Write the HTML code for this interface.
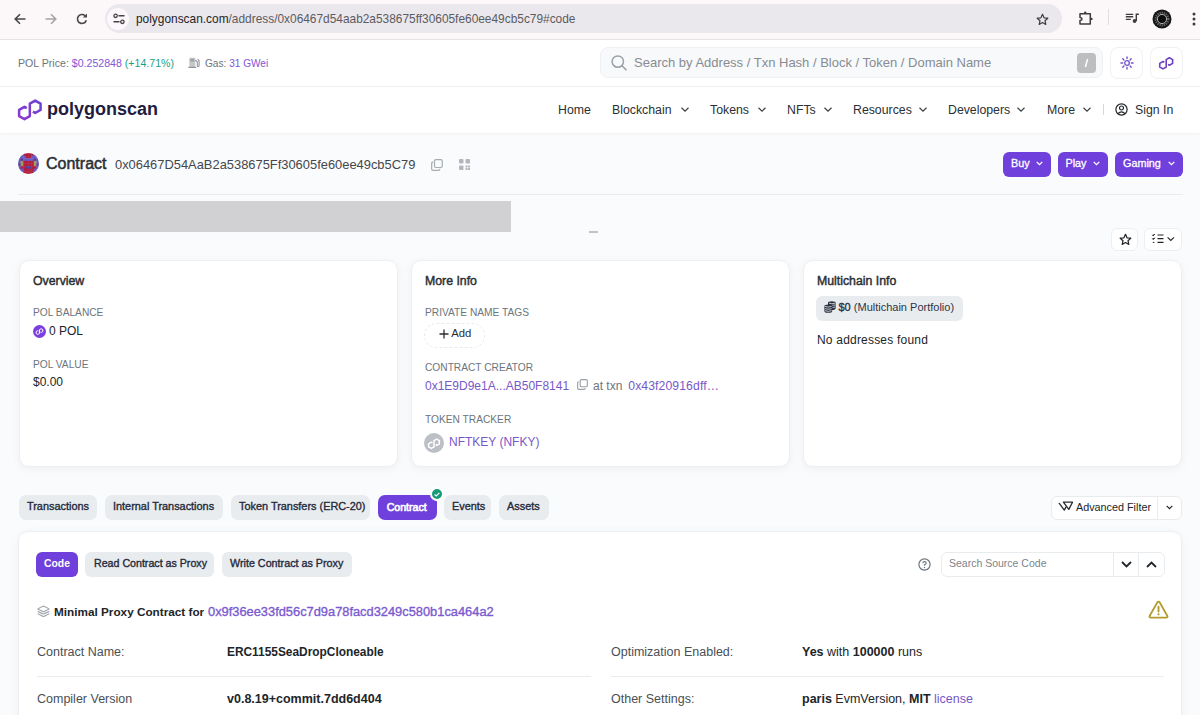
<!DOCTYPE html>
<html><head><meta charset="utf-8">
<style>
*{box-sizing:border-box;margin:0;padding:0}
html,body{width:1200px;height:715px;overflow:hidden}
body{font-family:"Liberation Sans",sans-serif;background:#fafbfc;position:relative;color:#212529;line-height:normal}
.a{position:absolute;white-space:nowrap}
svg{display:block;position:absolute;overflow:visible}
b{font-weight:bold}
/* chrome */
#chrome{position:absolute;left:0;top:0;width:1200px;height:40px;background:#fcf8f9;border-bottom:1px solid #e6e1e5}
#pill{position:absolute;left:105px;top:4px;width:957px;height:29px;border-radius:14.5px;background:#eae7ed}
#info{position:absolute;left:107px;top:8px;width:22px;height:22px;border-radius:11px;background:#fbf7fa}
#url{left:136px;top:12px;font-size:11.9px;color:#5c5b5e}
/* topbar */
#topbar{position:absolute;left:0;top:40px;width:1200px;height:47px;background:#fff;border-bottom:1px solid #eceef1}
.tb{font-size:10.6px;color:#6c757d;top:57px}
#search{position:absolute;left:600px;top:47px;width:503px;height:31px;border:1px solid #eef0f3;background:#f8f9fa;border-radius:8px}
#ph{left:634px;top:55px;font-size:13px;color:#868c92}
#slash{position:absolute;left:1077px;top:53px;width:19px;height:20px;background:#bdbec0;border-radius:4px}
.sqbtn{position:absolute;top:47px;width:33px;height:32px;border:1px solid #eef0f3;border-radius:8px;background:#fff}
/* nav */
#nav{position:absolute;left:0;top:87px;width:1200px;height:46px;background:#fff;box-shadow:0 1px 2px rgba(0,0,0,.05)}
.nv{font-size:12.3px;color:#2b2f33;top:103.3px}
/* header */
#hdr_line{position:absolute;left:18px;top:194px;width:1165px;height:1px;background:#e9ecef}
.pbtn{position:absolute;top:152px;height:25px;border-radius:6px;background:#7040dc}
.pbt{font-size:10.8px;color:#fff;top:157px;-webkit-text-stroke:.3px #fff}
/* cards */
.card{position:absolute;background:#fff;border-radius:10px;box-shadow:0 2px 8px rgba(189,197,209,.2);border:1px solid #edeff3}
.ct{font-size:12.3px;color:#2b2f33;-webkit-text-stroke:.45px #2b2f33}
.lbl{font-size:10.2px;color:#6c757d}
.val{font-size:12px;color:#212529}
.lnk{color:#7758c8}
.tab{position:absolute;top:495px;height:24.7px;border-radius:7px;background:#e9ecef}
.tt{font-size:10.9px;color:#252a3a;top:500px;-webkit-text-stroke:.35px #252a3a}
.btn2{position:absolute;top:552px;height:25px;border-radius:6px;background:#e9ecef}
.rowl{font-size:12.5px;color:#4a4f55}
.rowv{font-size:12.5px;color:#212529}
</style></head><body>

<!-- ============ browser chrome ============ -->
<div id="chrome">
  <div id="pill"></div>
  <div id="info"></div>
</div>
<!-- back -->
<svg style="left:14px;top:13px" width="12" height="12" viewBox="0 0 12 12"><path d="M11.5 6H1.2M6 1.2L1.2 6 6 10.8" stroke="#474747" stroke-width="1.6" fill="none"/></svg>
<!-- fwd -->
<svg style="left:45px;top:13px" width="12" height="12" viewBox="0 0 12 12"><path d="M0.5 6H10.8M6 1.2L10.8 6 6 10.8" stroke="#a5a3a6" stroke-width="1.6" fill="none"/></svg>
<!-- reload -->
<svg style="left:76px;top:13px" width="12" height="12" viewBox="0 0 12 12"><path d="M10.3 7.2A4.5 4.5 0 1 1 9 2.6" stroke="#474747" stroke-width="1.6" fill="none"/><path d="M11 0.5V4.6H6.9Z" fill="#474747"/></svg>
<!-- tune -->
<svg style="left:113px;top:13px" width="12" height="12" viewBox="0 0 12 12"><circle cx="2.6" cy="2.8" r="1.7" stroke="#444" stroke-width="1.3" fill="none"/><path d="M5.5 2.8H11.5M0.5 8.8H6.5" stroke="#444" stroke-width="1.4"/><circle cx="9.4" cy="8.8" r="1.7" stroke="#444" stroke-width="1.3" fill="none"/></svg>
<div class="a" id="url"><span style="color:#1f1f1f">polygonscan.com</span>/address/0x06467d54aab2a538675ff30605fe60ee49cb5c79#code</div>
<!-- star -->
<svg style="left:1036px;top:13px" width="13" height="13" viewBox="0 0 24 24"><path d="M12 2.5l2.9 6.4 6.9.7-5.2 4.6 1.5 6.9L12 17.6l-6.1 3.5 1.5-6.9-5.2-4.6 6.9-.7z" stroke="#3c3c3c" stroke-width="2.2" fill="none" stroke-linejoin="round"/></svg>
<!-- puzzle -->
<svg style="left:1078px;top:11px" width="15" height="15" viewBox="0 0 15 15"><path d="M2 2.8H12.3V13H2V9.4Q4 9 4 7.9Q4 6.8 2 6.4Z" stroke="#3c3c3c" stroke-width="1.5" fill="none" stroke-linejoin="round"/><circle cx="7.2" cy="1.7" r="1.2" fill="#3c3c3c"/><circle cx="13.4" cy="7.9" r="1.2" fill="#3c3c3c"/></svg>
<div class="a" style="left:1108px;top:9px;width:1px;height:16px;background:#e2dde4"></div>
<!-- media -->
<svg style="left:1125px;top:13px" width="15" height="10" viewBox="0 0 15 10"><path d="M.8 1.4H8.2M.8 3.7H8.2M.8 6.4H5.8" stroke="#3c3c3c" stroke-width="1.4"/><path d="M11.3 8V1.3H13.9" stroke="#3c3c3c" stroke-width="1.4" fill="none"/><circle cx="9.6" cy="8" r="1.9" fill="#3c3c3c"/></svg>
<!-- profile -->
<svg style="left:1152px;top:9px" width="20" height="20" viewBox="0 0 20 20"><circle cx="10" cy="10" r="9.5" fill="#161616"/><circle cx="10" cy="10" r="6.3" stroke="#6a6a6a" stroke-width="2.2" stroke-dasharray="1.2 1" fill="none"/><circle cx="10" cy="10" r="3.6" fill="#0c0c0c"/><circle cx="10" cy="10" r="4.6" stroke="#bdbdbd" stroke-width=".9" fill="none"/></svg>
<!-- dots -->
<svg style="left:1192px;top:11px" width="4" height="16" viewBox="0 0 4 16"><circle cx="2" cy="3" r="1.5" fill="#3c3c3c"/><circle cx="2" cy="8" r="1.5" fill="#3c3c3c"/><circle cx="2" cy="13" r="1.5" fill="#3c3c3c"/></svg>

<!-- ============ top bar ============ -->
<div id="topbar"></div>
<div class="a tb" style="left:18px">POL Price: <span style="color:#8256d6">$0.252848</span> <span style="color:#1b9f88">(+14.71%)</span></div>
<!-- gas icon -->
<svg style="left:187.5px;top:57px" width="12" height="11" viewBox="0 0 12 11"><path d="M1.3 10V1.6Q1.3 .7 2.2 .7H6.4Q7.3 .7 7.3 1.6V10Z" fill="#c4c7cb"/><rect x="2.4" y="1.8" width="3.8" height="2.8" fill="#9ea3a8"/><path d="M7.3 3.2L9.3 4.8V8.8a.9 .9 0 0 0 1.8 0V3.8L9.6 2" stroke="#8f949a" stroke-width="1.1" fill="none"/><path d="M.3 10.4H8.3" stroke="#8f949a" stroke-width="1.2"/></svg>
<div class="a tb" style="left:205px;font-size:10.1px;top:57.5px">Gas: <span style="color:#8256d6">31 GWei</span></div>
<div id="search"></div>
<svg style="left:611px;top:55px" width="17" height="16" viewBox="0 0 17 16"><circle cx="6.8" cy="6.6" r="5.7" stroke="#9aa0a6" stroke-width="1.5" fill="none"/><path d="M11 10.8L15.5 15.3" stroke="#9aa0a6" stroke-width="1.6"/></svg>
<div class="a" id="ph">Search by Address / Txn Hash / Block / Token / Domain Name</div>
<div id="slash"></div>
<svg style="left:1083px;top:57px" width="7" height="12" viewBox="0 0 7 12"><path d="M4.6 2L2.4 10" stroke="#fff" stroke-width="1.5"/></svg>
<div class="sqbtn" style="left:1110px"></div>
<!-- sun -->
<svg style="left:1119.5px;top:55.5px" width="14" height="14" viewBox="0 0 14 14"><circle cx="7" cy="7" r="2.3" stroke="#7052c8" stroke-width="1.3" fill="none"/><path d="M7 1V2.6M7 11.4V13M1 7H2.6M11.4 7H13M2.8 2.8L3.9 3.9M10.1 10.1L11.2 11.2M2.8 11.2L3.9 10.1M10.1 3.9L11.2 2.8" stroke="#7052c8" stroke-width="1.4" stroke-linecap="round"/></svg>
<div class="sqbtn" style="left:1150px"></div>
<svg style="left:1159px;top:56.5px" width="14.4" height="12.6" viewBox="17.85 99.35 24 21"><path d="M26.8 108.15L24.47 106.8 19.1 109.9V116.1L24.47 119.2 29.84 116.1V103.7L35.2 100.6 40.57 103.7V109.9L35.2 113 32.9 111.65" stroke="#6f3fc6" stroke-width="2.7" fill="none" stroke-linejoin="round"/></svg>

<!-- ============ nav ============ -->
<div id="nav"></div>
<svg style="left:15px;top:97px" width="30" height="26" viewBox="15 97 30 26"><defs><linearGradient id="lg" x1="0" y1="1" x2="1" y2="0"><stop offset="0" stop-color="#9038d0"/><stop offset="1" stop-color="#6c3fd0"/></linearGradient></defs><path d="M26.8 108.15L24.47 106.8 19.1 109.9V116.1L24.47 119.2 29.84 116.1V103.7L35.2 100.6 40.57 103.7V109.9L35.2 113 32.9 111.65" stroke="url(#lg)" stroke-width="2.5" fill="none" stroke-linejoin="round"/></svg>
<div class="a" style="left:47px;top:98.5px;font-size:18px;font-weight:bold;color:#221c40">polygonscan</div>
<div class="a nv" style="left:558px">Home</div>
<div class="a nv" style="left:612px">Blockchain</div>
<div class="a nv" style="left:710px">Tokens</div>
<div class="a nv" style="left:787px">NFTs</div>
<div class="a nv" style="left:853px">Resources</div>
<div class="a nv" style="left:948px">Developers</div>
<div class="a nv" style="left:1047px">More</div>
<svg style="left:681px;top:107px" width="8" height="5" viewBox="0 0 8 5"><path d="M.5 .8L4 4.2 7.5 .8" stroke="#3b3f44" stroke-width="1.2" fill="none"/></svg>
<svg style="left:758px;top:107px" width="8" height="5" viewBox="0 0 8 5"><path d="M.5 .8L4 4.2 7.5 .8" stroke="#3b3f44" stroke-width="1.2" fill="none"/></svg>
<svg style="left:824px;top:107px" width="8" height="5" viewBox="0 0 8 5"><path d="M.5 .8L4 4.2 7.5 .8" stroke="#3b3f44" stroke-width="1.2" fill="none"/></svg>
<svg style="left:919px;top:107px" width="8" height="5" viewBox="0 0 8 5"><path d="M.5 .8L4 4.2 7.5 .8" stroke="#3b3f44" stroke-width="1.2" fill="none"/></svg>
<svg style="left:1017px;top:107px" width="8" height="5" viewBox="0 0 8 5"><path d="M.5 .8L4 4.2 7.5 .8" stroke="#3b3f44" stroke-width="1.2" fill="none"/></svg>
<svg style="left:1083px;top:107px" width="8" height="5" viewBox="0 0 8 5"><path d="M.5 .8L4 4.2 7.5 .8" stroke="#3b3f44" stroke-width="1.2" fill="none"/></svg>
<div class="a" style="left:1103px;top:104px;width:1px;height:11px;background:#d5d8dc"></div>
<svg style="left:1115px;top:103px" width="13" height="13" viewBox="0 0 13 13"><circle cx="6.5" cy="6.5" r="5.6" stroke="#212529" stroke-width="1.2" fill="none"/><circle cx="6.5" cy="5" r="2" stroke="#212529" stroke-width="1.2" fill="none"/><path d="M3 10.6Q6.5 7 10 10.6" stroke="#212529" stroke-width="1.2" fill="none"/></svg>
<div class="a nv" style="left:1135px">Sign In</div>

<!-- ============ contract header ============ -->
<svg style="left:18px;top:153px" width="21" height="21" viewBox="0 0 21 21"><defs><clipPath id="cc"><circle cx="10.5" cy="10.5" r="10.5"/></clipPath></defs><g clip-path="url(#cc)"><rect x="0.000" y="0.000" width="3" height="3" fill="#6b5cc4"/><rect x="2.625" y="0.000" width="3" height="3" fill="#6b5cc4"/><rect x="5.250" y="0.000" width="3" height="3" fill="#b21f3e"/><rect x="7.875" y="0.000" width="3" height="3" fill="#b21f3e"/><rect x="10.500" y="0.000" width="3" height="3" fill="#b21f3e"/><rect x="13.125" y="0.000" width="3" height="3" fill="#b21f3e"/><rect x="15.750" y="0.000" width="3" height="3" fill="#6b5cc4"/><rect x="18.375" y="0.000" width="3" height="3" fill="#6b5cc4"/><rect x="0.000" y="2.625" width="3" height="3" fill="#6b5cc4"/><rect x="2.625" y="2.625" width="3" height="3" fill="#6b5cc4"/><rect x="5.250" y="2.625" width="3" height="3" fill="#6b5cc4"/><rect x="7.875" y="2.625" width="3" height="3" fill="#b21f3e"/><rect x="10.500" y="2.625" width="3" height="3" fill="#b21f3e"/><rect x="13.125" y="2.625" width="3" height="3" fill="#6b5cc4"/><rect x="15.750" y="2.625" width="3" height="3" fill="#6b5cc4"/><rect x="18.375" y="2.625" width="3" height="3" fill="#6b5cc4"/><rect x="0.000" y="5.250" width="3" height="3" fill="#6b5cc4"/><rect x="2.625" y="5.250" width="3" height="3" fill="#5a3a98"/><rect x="5.250" y="5.250" width="3" height="3" fill="#6b5cc4"/><rect x="7.875" y="5.250" width="3" height="3" fill="#6b5cc4"/><rect x="10.500" y="5.250" width="3" height="3" fill="#6b5cc4"/><rect x="13.125" y="5.250" width="3" height="3" fill="#6b5cc4"/><rect x="15.750" y="5.250" width="3" height="3" fill="#5a3a98"/><rect x="18.375" y="5.250" width="3" height="3" fill="#6b5cc4"/><rect x="0.000" y="7.875" width="3" height="3" fill="#6b5cc4"/><rect x="2.625" y="7.875" width="3" height="3" fill="#a09a5c"/><rect x="5.250" y="7.875" width="3" height="3" fill="#b21f3e"/><rect x="7.875" y="7.875" width="3" height="3" fill="#b21f3e"/><rect x="10.500" y="7.875" width="3" height="3" fill="#b21f3e"/><rect x="13.125" y="7.875" width="3" height="3" fill="#b21f3e"/><rect x="15.750" y="7.875" width="3" height="3" fill="#a09a5c"/><rect x="18.375" y="7.875" width="3" height="3" fill="#6b5cc4"/><rect x="0.000" y="10.500" width="3" height="3" fill="#5a3a98"/><rect x="2.625" y="10.500" width="3" height="3" fill="#a09a5c"/><rect x="5.250" y="10.500" width="3" height="3" fill="#b21f3e"/><rect x="7.875" y="10.500" width="3" height="3" fill="#b21f3e"/><rect x="10.500" y="10.500" width="3" height="3" fill="#b21f3e"/><rect x="13.125" y="10.500" width="3" height="3" fill="#b21f3e"/><rect x="15.750" y="10.500" width="3" height="3" fill="#a09a5c"/><rect x="18.375" y="10.500" width="3" height="3" fill="#5a3a98"/><rect x="0.000" y="13.125" width="3" height="3" fill="#6b5cc4"/><rect x="2.625" y="13.125" width="3" height="3" fill="#b21f3e"/><rect x="5.250" y="13.125" width="3" height="3" fill="#b21f3e"/><rect x="7.875" y="13.125" width="3" height="3" fill="#5a3a98"/><rect x="10.500" y="13.125" width="3" height="3" fill="#5a3a98"/><rect x="13.125" y="13.125" width="3" height="3" fill="#b21f3e"/><rect x="15.750" y="13.125" width="3" height="3" fill="#b21f3e"/><rect x="18.375" y="13.125" width="3" height="3" fill="#6b5cc4"/><rect x="0.000" y="15.750" width="3" height="3" fill="#6b5cc4"/><rect x="2.625" y="15.750" width="3" height="3" fill="#6b5cc4"/><rect x="5.250" y="15.750" width="3" height="3" fill="#b21f3e"/><rect x="7.875" y="15.750" width="3" height="3" fill="#b21f3e"/><rect x="10.500" y="15.750" width="3" height="3" fill="#b21f3e"/><rect x="13.125" y="15.750" width="3" height="3" fill="#b21f3e"/><rect x="15.750" y="15.750" width="3" height="3" fill="#6b5cc4"/><rect x="18.375" y="15.750" width="3" height="3" fill="#6b5cc4"/><rect x="0.000" y="18.375" width="3" height="3" fill="#6b5cc4"/><rect x="2.625" y="18.375" width="3" height="3" fill="#6b5cc4"/><rect x="5.250" y="18.375" width="3" height="3" fill="#b21f3e"/><rect x="7.875" y="18.375" width="3" height="3" fill="#b21f3e"/><rect x="10.500" y="18.375" width="3" height="3" fill="#b21f3e"/><rect x="13.125" y="18.375" width="3" height="3" fill="#b21f3e"/><rect x="15.750" y="18.375" width="3" height="3" fill="#6b5cc4"/><rect x="18.375" y="18.375" width="3" height="3" fill="#6b5cc4"/></g></svg>
<div class="a" style="left:46px;top:154.5px;font-size:16px;color:#2a2e33;-webkit-text-stroke:.5px #2a2e33">Contract</div>
<div class="a" style="left:115px;top:157.1px;font-size:12.9px;color:#43474c">0x06467D54AaB2a538675Ff30605fe60ee49cb5C79</div>
<svg style="left:431px;top:159px" width="12" height="12" viewBox="0 0 12 12"><rect x="3.5" y="0.7" width="7.8" height="7.8" rx="1.5" stroke="#a6abb0" stroke-width="1.2" fill="none"/><path d="M2.3 3.2H1.8Q.7 3.2 .7 4.3V10.2Q.7 11.3 1.8 11.3H7.7Q8.8 11.3 8.8 10.2V9.7" stroke="#a6abb0" stroke-width="1.2" fill="none"/></svg>
<svg style="left:459px;top:159px" width="11" height="11" viewBox="0 0 11 11"><rect x="0" y="0" width="4.5" height="4.5" rx="1" fill="#b3b7bc"/><rect x="6.5" y="0" width="4.5" height="4.5" rx="1" fill="#b3b7bc"/><rect x="0" y="6.5" width="4.5" height="4.5" rx="1" fill="#b3b7bc"/><rect x="6.5" y="6.5" width="2" height="2" fill="#b3b7bc"/><rect x="9" y="9" width="2" height="2" fill="#b3b7bc"/><rect x="9" y="6.5" width="2" height="2" fill="#b3b7bc"/><rect x="6.5" y="9" width="2" height="2" fill="#b3b7bc"/></svg>
<div id="hdr_line"></div>
<div class="pbtn" style="left:1003px;width:48px"></div>
<div class="a pbt" style="left:1011px">Buy</div>
<div class="pbtn" style="left:1058px;width:50px"></div>
<div class="a pbt" style="left:1065.5px">Play</div>
<div class="pbtn" style="left:1115px;width:68px"></div>
<div class="a pbt" style="left:1123px">Gaming</div>
<svg style="left:1036px;top:160.5px" width="7" height="5" viewBox="0 0 7 5"><path d="M.7 .9L3.5 3.7 6.3 .9" stroke="#fff" stroke-width="1.3" fill="none"/></svg>
<svg style="left:1093px;top:160.5px" width="7" height="5" viewBox="0 0 7 5"><path d="M.7 .9L3.5 3.7 6.3 .9" stroke="#fff" stroke-width="1.3" fill="none"/></svg>
<svg style="left:1167.5px;top:160.5px" width="7" height="5" viewBox="0 0 7 5"><path d="M.7 .9L3.5 3.7 6.3 .9" stroke="#fff" stroke-width="1.3" fill="none"/></svg>

<div class="a" style="left:0;top:201px;width:511px;height:31px;background:#d1d1d3"></div>
<div class="a" style="left:589px;top:231px;width:9px;height:2px;background:#c2c2c2"></div>

<div class="a" style="left:1111px;top:228px;width:27px;height:23px;border:1px solid #eceef1;border-radius:6px;background:#fff"></div>
<svg style="left:1119px;top:233px" width="13" height="13" viewBox="0 0 24 24"><path d="M12 2.5l2.9 6.4 6.9.7-5.2 4.6 1.5 6.9L12 17.6l-6.1 3.5 1.5-6.9-5.2-4.6 6.9-.7z" stroke="#212529" stroke-width="2.3" fill="none" stroke-linejoin="round"/></svg>
<div class="a" style="left:1144px;top:228px;width:38px;height:23px;border:1px solid #eceef1;border-radius:6px;background:#fff"></div>
<svg style="left:1152px;top:234px" width="23" height="10" viewBox="0 0 23 10"><path d="M5.5 1H11.5M5.5 4.7H11.5M5.5 8.4H11.5" stroke="#212529" stroke-width="1.2"/><path d="M.3 .9L1.2 1.8 2.9 .1M.3 4.6L1.2 5.5 2.9 3.8M.8 8.4H2.4" stroke="#212529" stroke-width="1"/><path d="M15.6 3.3L18.8 6.5 22 3.3" stroke="#212529" stroke-width="1.1" fill="none"/></svg>

<!-- ============ cards ============ -->
<div class="card" style="left:19px;top:260px;width:379px;height:207px"></div>
<div class="a ct" style="left:33px;top:273.5px">Overview</div>
<div class="a lbl" style="left:33px;top:307px">POL BALANCE</div>
<svg style="left:32.5px;top:324.5px" width="13" height="13" viewBox="0 0 13 13"><circle cx="6.5" cy="6.5" r="6.5" fill="#7b3fe0"/><svg x="2.8" y="3.3" width="7.4" height="6.5" viewBox="17.85 99.35 24 21" style="position:static"><path d="M26.8 108.15L24.47 106.8 19.1 109.9V116.1L24.47 119.2 29.84 116.1V103.7L35.2 100.6 40.57 103.7V109.9L35.2 113 32.9 111.65" stroke="#fff" stroke-width="3.2" fill="none" stroke-linejoin="round"/></svg></svg>
<div class="a val" style="left:49px;top:324px">0 POL</div>
<div class="a lbl" style="left:33px;top:358.5px">POL VALUE</div>
<div class="a val" style="left:33px;top:375px">$0.00</div>

<div class="card" style="left:411px;top:260px;width:379px;height:207px"></div>
<div class="a ct" style="left:425px;top:273.5px">More Info</div>
<div class="a lbl" style="left:425px;top:307px">PRIVATE NAME TAGS</div>
<div class="a" style="left:424px;top:323px;width:61px;height:25px;border:1px dashed #e8ebee;border-radius:13px"></div>
<svg style="left:439px;top:329px" width="10" height="10" viewBox="0 0 10 10"><path d="M5 .5V9.5M.5 5H9.5" stroke="#2b2f33" stroke-width="1.3"/></svg><div class="a val" style="left:451.3px;top:327.3px;font-size:11.3px;color:#2b2f33">Add</div>
<div class="a lbl" style="left:425px;top:362px">CONTRACT CREATOR</div>
<div class="a val" style="left:425px;top:379px"><span class="lnk">0x1E9D9e1A...AB50F8141</span></div>
<svg style="left:577px;top:379px" width="11" height="11" viewBox="0 0 12 12"><rect x="3.5" y="0.7" width="7.8" height="7.8" rx="1.5" stroke="#9aa0a6" stroke-width="1.2" fill="none"/><path d="M2.3 3.2H1.8Q.7 3.2 .7 4.3V10.2Q.7 11.3 1.8 11.3H7.7Q8.8 11.3 8.8 10.2V9.7" stroke="#9aa0a6" stroke-width="1.2" fill="none"/></svg>
<div class="a val" style="left:593px;top:379px;color:#6c757d">at txn</div><div class="a val lnk" style="left:628.3px;top:379px;font-size:12.2px;letter-spacing:.1px">0x43f20916dff…</div>
<div class="a lbl" style="left:425px;top:414px">TOKEN TRACKER</div>
<svg style="left:424px;top:433px" width="20" height="20" viewBox="0 0 20 20"><circle cx="10" cy="10" r="10" fill="#bcc0c6"/><svg x="4" y="5.5" width="12" height="10.5" viewBox="17.85 99.35 24 21" style="position:static"><path d="M26.8 108.15L24.47 106.8 19.1 109.9V116.1L24.47 119.2 29.84 116.1V103.7L35.2 100.6 40.57 103.7V109.9L35.2 113 32.9 111.65" stroke="#fff" stroke-width="3" fill="none" stroke-linejoin="round"/></svg></svg>
<div class="a val" style="left:449px;top:435px"><span class="lnk">NFTKEY (NFKY)</span></div>

<div class="card" style="left:803px;top:260px;width:379px;height:207px"></div>
<div class="a ct" style="left:817px;top:273.5px">Multichain Info</div>
<div class="a" style="left:816px;top:296px;width:147px;height:25px;border-radius:6px;background:#e9ecef"></div>
<svg style="left:823.5px;top:301px" width="12" height="12" viewBox="0 0 12 12"><path d="M4 1.8Q4 .3 7.8 .3T11.6 1.8V7.6Q11.6 8.8 9 9.1H4Z" fill="#2b3140"/><path d="M5 2.2Q7.8 3.3 11 2.2M8.3 4.3Q10 4.3 11 3.9M8.3 6.4Q10 6.4 11 6" stroke="#e9ecef" stroke-width=".8" fill="none"/><path d="M.4 5Q.4 3.4 4.3 3.4T8.2 5V10.3Q8.2 11.8 4.3 11.8T.4 10.3Z" fill="#2b3140"/><path d="M1 5.4Q4.3 6.7 7.6 5.4M1 7.6Q4.3 8.9 7.6 7.6M1 9.7Q4.3 11 7.6 9.7" stroke="#e9ecef" stroke-width=".8" fill="none"/></svg>
<div class="a" style="left:838.5px;top:301px;font-size:11px;color:#2d3446"><span style="-webkit-text-stroke:.35px #2d3446">$0</span> (Multichain Portfolio)</div>
<div class="a val" style="left:817px;top:333px;letter-spacing:.2px">No addresses found</div>

<!-- ============ tabs ============ -->
<div class="tab" style="left:19px;width:78px"></div><div class="a tt" style="left:27px">Transactions</div>
<div class="tab" style="left:105px;width:118px"></div><div class="a tt" style="left:113px">Internal Transactions</div>
<div class="tab" style="left:231px;width:139px"></div><div class="a tt" style="left:239px">Token Transfers (ERC-20)</div>
<div class="tab" style="left:378px;width:59px;background:#7040dc"></div><div class="a tt" style="left:386.7px;top:500.7px;color:#fff;-webkit-text-stroke:.6px #fff;font-size:10.6px">Contract</div>
<div class="a" style="left:429.7px;top:487px;width:14px;height:14px;border-radius:50%;background:#179a78;border:2px solid #fff"></div>
<svg style="left:433.8px;top:491.6px" width="6" height="5" viewBox="0 0 6 5"><path d="M.6 2.5L2.2 4 5.4 .8" stroke="#fff" stroke-width="1.1" fill="none"/></svg>
<div class="tab" style="left:444px;width:47px"></div><div class="a tt" style="left:452px">Events</div>
<div class="tab" style="left:499px;width:50px"></div><div class="a tt" style="left:507px">Assets</div>

<div class="a" style="left:1051px;top:496px;width:131px;height:24px;border:1px solid #e9ecef;border-radius:6px;background:#fff"></div>
<div class="a" style="left:1157px;top:496px;width:1px;height:24px;background:#e9ecef"></div>
<svg style="left:1058px;top:500px" width="16" height="12" viewBox="0 0 16 12"><path d="M5.4 2.1L14.5 2.2 10.8 9.4Z" stroke="#2b2f33" stroke-width="1.35" fill="none" stroke-linejoin="round"/><path d="M1.3 3.4L6.3 10.1 7.9 7.2" stroke="#2b2f33" stroke-width="1.35" fill="none" stroke-linejoin="round" stroke-linecap="round"/></svg>
<div class="a" style="left:1076px;top:500.5px;font-size:10.8px;color:#212529">Advanced Filter</div>
<svg style="left:1166px;top:505px" width="7" height="5" viewBox="0 0 7 5"><path d="M.7 .9L3.5 3.7 6.3 .9" stroke="#212529" stroke-width="1.2" fill="none"/></svg>

<!-- ============ code card ============ -->
<div class="card" style="left:18px;top:531px;width:1164px;height:220px"></div>
<div class="btn2" style="left:36px;width:42px;background:#7040dc"></div><div class="a" style="left:44px;top:557.5px;font-size:10.4px;color:#fff;font-weight:bold">Code</div>
<div class="btn2" style="left:85px;width:129px"></div><div class="a tt" style="left:94px;top:557px;font-size:10.65px">Read Contract as Proxy</div>
<div class="btn2" style="left:222px;width:130px"></div><div class="a tt" style="left:230px;top:557px;font-size:10.75px">Write Contract as Proxy</div>

<svg style="left:918px;top:558px" width="13" height="13" viewBox="0 0 13 13"><circle cx="6.5" cy="6.5" r="5.6" stroke="#6c757d" stroke-width="1.2" fill="none"/><path d="M4.8 5.2Q4.8 3.6 6.5 3.6T8.2 5.2Q8.2 6.2 6.5 6.8V7.8" stroke="#6c757d" stroke-width="1.1" fill="none"/><circle cx="6.5" cy="9.5" r=".7" fill="#6c757d"/></svg>
<div class="a" style="left:941px;top:552px;width:224px;height:25px;border:1px solid #e9ecef;border-radius:6px;background:#fff"></div>
<div class="a" style="left:1113px;top:552px;width:1px;height:25px;background:#e9ecef"></div>
<div class="a" style="left:1138px;top:552px;width:1px;height:25px;background:#e9ecef"></div>
<div class="a" style="left:949px;top:557px;font-size:10.5px;color:#7d838a">Search Source Code</div>
<svg style="left:1121px;top:561px" width="11" height="7" viewBox="0 0 11 7"><path d="M1 1L5.5 5.5 10 1" stroke="#212529" stroke-width="1.8" fill="none"/></svg>
<svg style="left:1146px;top:561px" width="11" height="7" viewBox="0 0 11 7"><path d="M1 6L5.5 1.5 10 6" stroke="#212529" stroke-width="1.8" fill="none"/></svg>

<svg style="left:36.5px;top:605px" width="13" height="13" viewBox="0 0 13 13"><path d="M6.5 1.2Q7 1.2 11.8 3.7Q12.2 4 11.8 4.3Q7 6.8 6.5 6.8T1.2 4.3Q.8 4 1.2 3.7Q6 1.2 6.5 1.2Z" stroke="#a3a8ae" stroke-width="1.2" fill="none"/><path d="M1.2 6.6Q6 9 6.5 9T11.8 6.6M1.2 9Q6 11.5 6.5 11.5T11.8 9" stroke="#a3a8ae" stroke-width="1.2" fill="none" stroke-linecap="round"/></svg>
<div class="a" style="left:54px;top:605px;font-size:11.75px;color:#212529"><b>Minimal Proxy Contract for</b></div><div class="a lnk" style="left:208px;top:604px;font-size:12.85px;-webkit-text-stroke:.35px #7b5ad0;color:#7b5ad0">0x9f36ee33fd56c7d9a78facd3249c580b1ca464a2</div>
<svg style="left:1148px;top:600px" width="21" height="19" viewBox="0 0 21 19"><path d="M9.2 2.6Q10.5 .6 11.8 2.6L19.2 15.6Q20.2 17.6 18 17.6H3Q.8 17.6 1.8 15.6Z" stroke="#b39a2e" stroke-width="1.9" fill="none" stroke-linejoin="round"/><path d="M10.5 6.8V11.6" stroke="#b39a2e" stroke-width="1.9" stroke-linecap="round"/><circle cx="10.5" cy="14.3" r="1.1" fill="#b39a2e"/></svg>

<div class="a rowl" style="left:37px;top:645px">Contract Name:</div>
<div class="a rowv" style="left:227px;top:645px"><b style="font-size:11.9px">ERC1155SeaDropCloneable</b></div>
<div class="a rowl" style="left:611px;top:645px">Optimization Enabled:</div>
<div class="a rowv" style="left:802px;top:645px"><b>Yes</b> with <b>100000</b> runs</div>
<div class="a" style="left:37px;top:676px;width:554px;height:1px;background:#e9ecef"></div>
<div class="a" style="left:611px;top:676px;width:553px;height:1px;background:#e9ecef"></div>
<div class="a rowl" style="left:37px;top:692px">Compiler Version</div>
<div class="a rowv" style="left:227px;top:692px"><b>v0.8.19+commit.7dd6d404</b></div>
<div class="a rowl" style="left:611px;top:692px">Other Settings:</div>
<div class="a rowv" style="left:802px;top:692px"><b>paris</b> EvmVersion, <b>MIT</b> <span class="lnk">license</span></div>

</body></html>
